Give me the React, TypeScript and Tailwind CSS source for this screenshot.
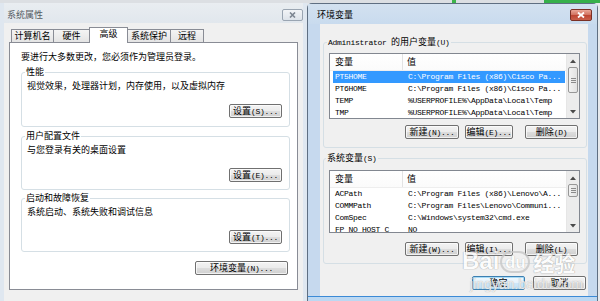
import React from "react";

const MONO = "font-['Liberation_Mono',monospace] text-[8px] tracking-[-0.3px]";

function Mx({ s }: { s: string }) {
  const parts = s.split(/([\x20-\x7e]+)/).filter((p) => p.length > 0);
  return (
    <>
      {parts.map((p, i) =>
        /^[\x20-\x7e]+$/.test(p) ? (
          <span key={i} className={`${MONO} whitespace-pre`}>
            {p}
          </span>
        ) : (
          <span key={i}>{p}</span>
        )
      )}
    </>
  );
}

function Btn({ s, className = "" }: { s: string; className?: string }) {
  return (
    <div
      className={`flex h-[14px] shrink-0 items-center justify-center rounded-[2px] border border-[#707070] bg-[linear-gradient(#f3f3f3,#ebebeb_50%,#dddddd_50%,#d0d0d0)] leading-[10px] shadow-[inset_0_0_0_1px_rgba(255,255,255,0.7)] ${className}`}
    >
      <span className="whitespace-nowrap">
        <Mx s={s} />
      </span>
    </div>
  );
}

function OkBtn({ s, className = "" }: { s: string; className?: string }) {
  return (
    <div
      className={`flex h-[14px] shrink-0 items-center justify-center rounded-[2px] border border-[#3c7fb1] bg-[linear-gradient(#f2f9fe,#e3f2fc_50%,#cfe8f8_50%,#c3e1f5)] leading-[10px] shadow-[inset_0_0_0_1px_rgba(160,215,245,0.9)] ${className}`}
    >
      <span className="whitespace-nowrap">
        <Mx s={s} />
      </span>
    </div>
  );
}

type Row = [string, string];

function ScrollBar({ thumbClass }: { thumbClass: string }) {
  return (
    <div className="flex w-[13px] flex-col border-l border-[#e6e6e6] bg-[#ececec]">
      <div className="flex h-[13px] items-center justify-center">
        <svg width="6" height="4" viewBox="0 0 6 4">
          <path d="M0 4 L3 0.5 L6 4 Z" fill="#4a4a4a" />
        </svg>
      </div>
      <div className="flex flex-1 flex-col">
        <div
          className={`mx-[1px] flex flex-col items-center justify-center gap-[1px] rounded-[2px] border border-[#979797] bg-[linear-gradient(90deg,#f2f2f2,#e2e2e2)] ${thumbClass}`}
        >
          <div className="h-px w-[5px] bg-[#8a8a8a]" />
          <div className="h-px w-[5px] bg-[#8a8a8a]" />
          <div className="h-px w-[5px] bg-[#8a8a8a]" />
        </div>
      </div>
      <div className="flex h-[13px] items-center justify-center">
        <svg width="6" height="4" viewBox="0 0 6 4">
          <path d="M0 0 L3 3.5 L6 0 Z" fill="#4a4a4a" />
        </svg>
      </div>
    </div>
  );
}

function ListView({
  rows,
  selected,
  heightClass,
  thumbClass,
}: {
  rows: Row[];
  selected: number;
  heightClass: string;
  thumbClass: string;
}) {
  return (
    <div className={`flex overflow-hidden border border-[#828790] bg-white ${heightClass}`}>
      <div className="flex min-w-0 flex-1 flex-col overflow-hidden">
        <div className="flex h-[17px] shrink-0 items-center border-b border-[#eeeeee] bg-[linear-gradient(#ffffff,#fbfbfb)]">
          <div className="flex h-full w-[73px] items-center border-r border-[#e3e3e3] pl-[5px]">变量</div>
          <div className="pl-[4px]">值</div>
        </div>
        {rows.map((r, i) => (
          <div
            key={i}
            className={`ml-[3px] mr-[1px] flex h-[12px] shrink-0 items-center whitespace-pre ${
              i === selected ? "bg-[#3399ff] text-white" : ""
            }`}
          >
            <div className={`w-[73px] shrink-0 overflow-hidden pl-[2px] ${MONO}`}>{r[0]}</div>
            <div className={`pl-[2px] ${MONO}`}>{r[1]}</div>
          </div>
        ))}
      </div>
      <ScrollBar thumbClass={thumbClass} />
    </div>
  );
}

function Tab({ label, cls, selected = false }: { label: string; cls: string; selected?: boolean }) {
  return (
    <div
      className={
        selected
          ? `relative z-10 -mb-px -ml-px flex h-[16px] items-start justify-center border border-b-0 border-[#898c95] bg-white pt-[1px] leading-[10px] ${cls}`
          : `flex h-[13px] items-start justify-center border border-b-0 border-[#898c95] bg-[linear-gradient(#f4f4f4,#e4e4e4)] pt-[1px] leading-[10px] ${cls}`
      }
    >
      {label}
    </div>
  );
}

function Group({
  legend,
  desc,
  btn,
  cls,
}: {
  legend: string;
  desc: string;
  btn: string;
  cls: string;
}) {
  return (
    <fieldset className={`ml-[11px] mr-[7px] rounded-[3px] border border-[#d5dfe5] pl-[5px] pr-[7px] ${cls}`}>
      <legend className="ml-[-2px] px-[1px] leading-[10px]">{legend}</legend>
      <div className="flex flex-col">
        <div className="mt-[4px] leading-[10px]">{desc}</div>
        <Btn s={btn} className="mt-[13px] w-[53px] self-end" />
      </div>
    </fieldset>
  );
}

export default function App() {
  const userRows: Row[] = [
    ["PT5HOME", "C:\\Program Files (x86)\\Cisco Pa..."],
    ["PT6HOME", "C:\\Program Files (x86)\\Cisco Pa..."],
    ["TEMP", "%USERPROFILE%\\AppData\\Local\\Temp"],
    ["TMP", "%USERPROFILE%\\AppData\\Local\\Temp"],
  ];
  const sysRows: Row[] = [
    ["ACPath", "C:\\Program Files (x86)\\Lenovo\\A..."],
    ["COMMPath", "C:\\Program Files\\Lenovo\\Communi..."],
    ["ComSpec", "C:\\Windows\\system32\\cmd.exe"],
    ["FP_NO_HOST_C", "NO"],
  ];

  return (
    <div className="relative flex h-[301px] w-[600px] flex-col overflow-hidden bg-[#e2e6ea] font-['Noto_Sans_CJK_SC',sans-serif] text-[9px] leading-[10px] text-black">
      {/* strip of what lies behind */}
      <div className="flex h-[3px] shrink-0 bg-[#dcdfe3]">
        <div className="w-[452px]" />
        <div className="w-[4px] bg-[#3cb44a]" />
        <div className="w-[88px]" />
        <div className="flex-1 bg-[#36b04a]" />
      </div>

      <div className="flex h-[298px]">
        {/* Left window: 系统属性 (inactive) */}
        <div className="flex w-[307px] shrink-0 flex-col bg-[#dfe7f0] px-[4px]">
          <div className="flex h-[20px] shrink-0 items-start justify-between bg-[linear-gradient(#e9edf1,#e1e7ed)] pl-[3px]">
            <div className="mt-[7px] text-[#555b62]">系统属性</div>
            <div className="mt-[6px] flex h-[12px] w-[21px] items-center justify-center rounded-[2px] border border-[#9aa5b2] bg-[linear-gradient(#f2f4f7,#dde3ea)]">
              <svg width="7" height="6" viewBox="0 0 7 6">
                <path d="M1 0.5 L6 5.5 M6 0.5 L1 5.5" stroke="#7c8591" strokeWidth="1.6" />
              </svg>
            </div>
          </div>
          <div className="flex flex-1 flex-col bg-[#f0f0f0] px-[5px] pt-[4px]">
            <div className="flex h-[15px] shrink-0 items-end pl-[2px]">
              <Tab label="计算机名" cls="w-[43px]" />
              <Tab label="硬件" cls="-ml-px w-[37px]" />
              <Tab label="高级" cls="w-[39px]" selected />
              <Tab label="系统保护" cls="-ml-px w-[44px]" />
              <Tab label="远程" cls="-ml-px w-[34px]" />
            </div>
            <div className="flex h-[248px] shrink-0 flex-col border border-[#898c95] bg-white pt-[9px]">
              <div className="pl-[11px] leading-[10px]">要进行大多数更改，您必须作为管理员登录。</div>
              <Group
                legend="性能"
                desc="视觉效果，处理器计划，内存使用，以及虚拟内存"
                btn="设置(S)..."
                cls="mt-[5px] pb-[8px]"
              />
              <Group legend="用户配置文件" desc="与您登录有关的桌面设置" btn="设置(E)..." cls="mt-[4px] pb-[7px]" />
              <Group
                legend="启动和故障恢复"
                desc="系统启动、系统失败和调试信息"
                btn="设置(T)..."
                cls="mt-[3px] pb-[7px]"
              />
              <Btn s="环境变量(N)..." className="mr-[9px] mt-[9px] w-[93px] self-end" />
            </div>
          </div>
        </div>

        {/* Right window: 环境变量 (active) */}
        <div className="flex w-[291px] shrink-0 flex-col rounded-t-[5px] border-x border-t border-[#5f6f82] bg-[#c6d9ee]">
          <div className="flex h-[20px] shrink-0 items-start justify-between bg-[linear-gradient(#d3e1f0,#c9dbee)] pl-[9px]">
            <div className="mt-[6px]">环境变量</div>
            <div className="mr-[5px] mt-[5px] flex h-[12px] w-[22px] items-center justify-center rounded-[2px] border border-[#7a3025] bg-[linear-gradient(#eba797,#d0705d_50%,#bd4330_50%,#c9604a)]">
              <svg width="8" height="6" viewBox="0 0 8 6">
                <path d="M1 0.5 L7 5.5 M7 0.5 L1 5.5" stroke="#ffffff" strokeWidth="1.8" />
              </svg>
            </div>
          </div>
          <div className="ml-[12px] mr-[9px] flex h-[272px] shrink-0 flex-col bg-[#f0f0f0] pt-[13px]">
            <fieldset className="ml-[3px] mr-[1px] rounded-[3px] border border-[#d5dfe5] pb-[8px] pl-[5px] pr-[6px]">
              <legend className="ml-[-2px] px-[1px] leading-[10px]">
                <Mx s="Administrator 的用户变量(U)" />
              </legend>
              <div className="flex flex-col">
                <div className="mt-[5px]">
                  <ListView rows={userRows} selected={0} heightClass="h-[66px]" thumbClass="h-[26px]" />
                </div>
                <div className="mt-[6px] flex justify-end pr-[2px]">
                  <Btn s="新建(N)..." className="w-[54px]" />
                  <Btn s="编辑(E)..." className="ml-[6px] w-[48px]" />
                  <Btn s="删除(D)" className="ml-[12px] w-[53px]" />
                </div>
              </div>
            </fieldset>
            <fieldset className="ml-[3px] mr-[1px] mt-[5px] rounded-[3px] border border-[#d5dfe5] pb-[7px] pl-[5px] pr-[6px]">
              <legend className="ml-[-3px] px-[1px] leading-[10px]">
                <Mx s="系统变量(S)" />
              </legend>
              <div className="flex flex-col">
                <div className="mt-[6px]">
                  <ListView rows={sysRows} selected={-1} heightClass="h-[63px]" thumbClass="h-[13px]" />
                </div>
                <div className="mt-[9px] flex justify-end pr-[2px]">
                  <Btn s="新建(W)..." className="w-[54px]" />
                  <Btn s="编辑(I)..." className="ml-[6px] w-[48px]" />
                  <Btn s="删除(L)" className="ml-[12px] w-[53px]" />
                </div>
              </div>
            </fieldset>
            <div className="mr-[2px] mt-[12px] flex justify-end gap-[8px]">
              <OkBtn s="确定" className="w-[53px]" />
              <Btn s="取消" className="w-[53px]" />
            </div>
          </div>
          <div className="flex-1 border-t border-[#3b8ad6] bg-[#bcd8f2]" />
        </div>
        <div className="flex-1 bg-[#e6e9ec]" />
      </div>

      {/* Baidu 经验 watermark */}
      <div className="pointer-events-none absolute left-[462px] top-[249px] flex items-end opacity-80">
        <span className="font-['Liberation_Sans',sans-serif] text-[24px] font-bold leading-[24px] text-white [text-shadow:0_0_1px_#9a9a9a,0_0_1px_#9a9a9a]">
          Bai
        </span>
        <span className="ml-[1px] flex h-[22px] w-[30px] items-center justify-center rounded-[11px] border-2 border-[#c8c8c8] font-['Liberation_Sans',sans-serif] text-[17px] font-bold leading-[17px] text-white [text-shadow:0_0_1px_#9a9a9a]">
          du
        </span>
        <span className="ml-[3px] text-[21px] font-bold leading-[22px] text-white [text-shadow:0_0_1px_#9a9a9a,0_0_1px_#9a9a9a]">
          经验
        </span>
      </div>
      <div className="pointer-events-none absolute left-[470px] top-[276px] font-['Liberation_Sans',sans-serif] text-[14px] leading-[16px] text-white/75 [text-shadow:0_0_1px_#a0a0a0]">
        jingyan.baidu.com
      </div>
    </div>
  );
}
